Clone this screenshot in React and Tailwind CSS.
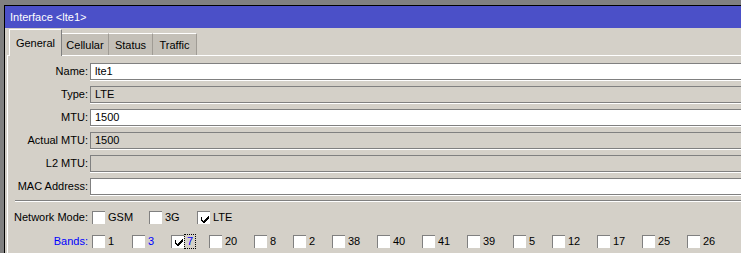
import React from 'react'

const fields = [
  { label: 'Name:', value: 'lte1', editable: true },
  { label: 'Type:', value: 'LTE' },
  { label: 'MTU:', value: '1500', editable: true },
  { label: 'Actual MTU:', value: '1500' },
  { label: 'L2 MTU:', value: '' },
  { label: 'MAC Address:', value: '', editable: true },
]

const modes = [
  { name: 'GSM', w: 'w-[57px]' },
  { name: '3G', w: 'w-[48px]' },
  { name: 'LTE', w: 'w-[48px]', checked: true },
]

const bands = [
  { n: '1', w: 'w-[40px]' },
  { n: '3', w: 'w-[39px]', blue: true },
  { n: '7', w: 'w-[38px]', blue: true, checked: true, focus: true },
  { n: '20', w: 'w-[45px]' },
  { n: '8', w: 'w-[39px]' },
  { n: '2', w: 'w-[39px]' },
  { n: '38', w: 'w-[45px]' },
  { n: '40', w: 'w-[45px]' },
  { n: '41', w: 'w-[45px]' },
  { n: '39', w: 'w-[46px]' },
  { n: '5', w: 'w-[39px]' },
  { n: '12', w: 'w-[45px]' },
  { n: '17', w: 'w-[45px]' },
  { n: '25', w: 'w-[45px]' },
  { n: '26', w: 'w-[45px]' },
]

const tabs = [
  { name: 'General', w: 'w-[53px]', active: true },
  { name: 'Cellular', w: 'w-[47px]' },
  { name: 'Status', w: 'w-[44px]' },
  { name: 'Traffic', w: 'w-[44px]' },
]

function Check({ checked }) {
  return (
    <span className="w-[13px] h-[13px] shrink-0 bg-white border-t border-l border-[#808080] border-r-white border-b-white flex items-center justify-center">
      {checked && (
        <svg width="9" height="9" viewBox="0 0 9 9" shapeRendering="crispEdges">
          <path d="M1 3h1v3h1v1h1v-1h1v-1h1v-1h1v-1h1v-1h1v3h-1v1h-1v1h-1v1h-1v1h-2v-1h-1v-1h-1z" fill="#000" />
        </svg>
      )}
    </span>
  )
}

export default function App() {
  return (
    <div className="w-[741px] h-[253px] overflow-hidden bg-[#808080] pl-[4px] pt-[5px] text-[11px] leading-[13px] text-black" style={{ fontFamily: '"Liberation Sans", Arial, sans-serif' }}>
      <div className="w-[800px] h-[260px] border-l border-t border-black bg-[#d4d0c8]">
        <div className="h-[22px] bg-[#4b50c8] text-white flex items-center pl-[5px]">Interface &lt;lte1&gt;</div>

        <div className="ml-[2px] mt-[1px]">
          <div className="flex items-end pl-[2px] h-[27px] border-b border-white">
            {tabs.map(t =>
              t.active ? (
                <div key={t.name} className={`${t.w} h-[27px] -mb-px bg-[#d4d0c8] border-t border-l border-white border-r border-r-[#808080] flex items-center justify-center`}>
                  {t.name}
                </div>
              ) : (
                <div key={t.name} className={`${t.w} h-[22px] bg-[#c4c0b8] border-t border-white border-r border-r-[#a09c95] flex items-center justify-center pt-[1px]`}>
                  {t.name}
                </div>
              )
            )}
          </div>

          <div className="border-l border-white pt-[7px] h-[210px]">
            <div className="flex flex-col gap-[6px]">
              {fields.map(f => (
                <div key={f.label} className="flex items-center h-[17px]">
                  <div className="w-[80px] text-right">{f.label}</div>
                  <div className={`ml-[2px] flex-1 h-[17px] flex items-center pl-[4px] border border-[#808080] shadow-[0_1px_0_#fff] ${f.editable ? 'bg-white' : 'bg-[#d4d0c8]'}`}>
                    {f.value}
                  </div>
                </div>
              ))}
            </div>

            <div className="ml-[7px] mt-[5px] border-t border-[#808080] border-b border-b-white" />

            <div className="mt-[7px] flex flex-col gap-[6px]">
              <div className="flex items-center h-[17px]">
                <div className="w-[80px] text-right">Network Mode:</div>
                <div className="ml-[4px] flex">
                  {modes.map(m => (
                    <div key={m.name} className={`${m.w} flex items-center`}>
                      <Check checked={m.checked} />
                      <span className="ml-[3px]">{m.name}</span>
                    </div>
                  ))}
                </div>
              </div>
              <div className="flex items-center h-[17px] pt-[1px]">
                <div className="w-[80px] text-right text-[#0000ff]">Bands:</div>
                <div className="ml-[4px] flex">
                  {bands.map(b => (
                    <div key={b.n} className={`${b.w} flex items-center shrink-0`}>
                      <Check checked={b.checked} />
                      {b.focus ? (
                        <span className="border border-dotted border-black px-[2px] text-[#0000ff]">{b.n}</span>
                      ) : (
                        <span className={`ml-[3px] ${b.blue ? 'text-[#0000ff]' : ''}`}>{b.n}</span>
                      )}
                    </div>
                  ))}
                </div>
              </div>
            </div>
          </div>
        </div>
      </div>
    </div>
  )
}
